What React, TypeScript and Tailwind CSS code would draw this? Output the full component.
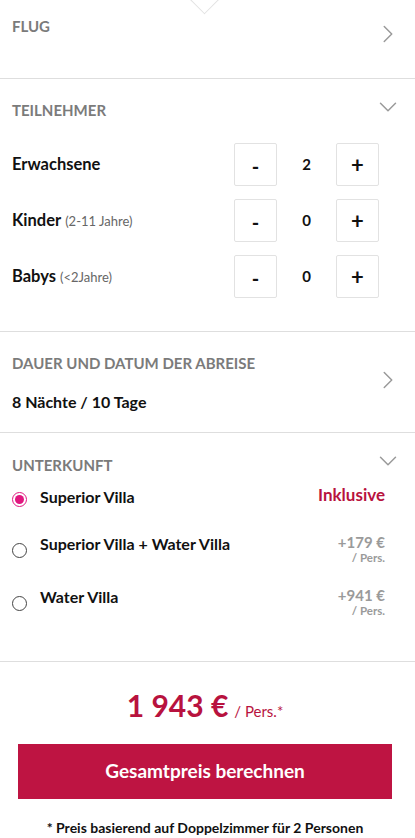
import { ChevronDown, ChevronRight } from "lucide-react";

const travellers = [
  { label: "Erwachsene", note: "", count: 2 },
  { label: "Kinder", note: "(2-11 Jahre)", count: 0 },
  { label: "Babys", note: "(<2Jahre)", count: 0 },
];

const rooms = [
  { name: "Superior Villa", price: "Inklusive", perPerson: false, selected: true },
  { name: "Superior Villa + Water Villa", price: "+179 €", perPerson: true, selected: false },
  { name: "Water Villa", price: "+941 €", perPerson: true, selected: false },
];

function SectionTitle({ children }: { children: React.ReactNode }) {
  return <h3 className="text-[15px] font-bold uppercase text-[#7b7b7b] leading-5">{children}</h3>;
}

function Counter({ count }: { count: number }) {
  return (
    <div className="flex items-center">
      <button className="w-[43px] h-[43px] border border-[#e2e2e2] rounded-[2px] flex items-center justify-center text-[20px] font-bold text-[#111] pt-[3px]">
        -
      </button>
      <span className="w-[59px] text-center text-[15px] font-bold text-[#111]">{count}</span>
      <button className="w-[43px] h-[43px] border border-[#e2e2e2] rounded-[2px] flex items-center justify-center text-[22px] font-bold text-[#111]">
        +
      </button>
    </div>
  );
}

function Radio({ checked }: { checked: boolean }) {
  return checked ? (
    <span className="mt-[5px] w-[15px] h-[15px] rounded-full border-[1.5px] border-[#e0177f] flex items-center justify-center shrink-0">
      <span className="w-[9px] h-[9px] rounded-full bg-[#e0177f]" />
    </span>
  ) : (
    <span className="mt-[9px] w-[15px] h-[15px] rounded-full border border-[#444] shrink-0" />
  );
}

export default function App() {
  return (
    <div
      className="relative w-[415px] h-[838px] bg-white overflow-hidden"
      style={{ fontFamily: "Lato, 'Liberation Sans', sans-serif" }}
    >
      {/* notch from the block above */}
      <div className="absolute left-[194px] top-[-11px] w-[21px] h-[21px] rotate-45 bg-white border-r border-b border-[#e2e2e2]" />

      {/* Flug */}
      <div className="h-[79px] border-b border-[#dedede] px-3 pt-[16px] flex justify-between">
        <SectionTitle>Flug</SectionTitle>
        <ChevronRight className="w-[30px] h-[30px] text-[#9a9a9a] mt-[3px]" strokeWidth={1.2} />
      </div>

      {/* Teilnehmer */}
      <div className="h-[253px] border-b border-[#dedede] pl-3 pr-[36px] pt-[21px]">
        <div className="flex justify-between">
          <SectionTitle>Teilnehmer</SectionTitle>
          <ChevronDown className="w-[30px] h-[30px] text-[#9a9a9a] -mr-[24px] -mt-[8px]" strokeWidth={1.2} />
        </div>
        <div className="mt-[21px] flex flex-col gap-[13px]">
          {travellers.map((t) => (
            <div key={t.label} className="h-[43px] flex items-center justify-between">
              <p className="text-[16.5px] font-bold text-[#111]">
                {t.label}
                {t.note && <span className="ml-1 text-[13px] font-normal text-[#666]">{t.note}</span>}
              </p>
              <Counter count={t.count} />
            </div>
          ))}
        </div>
      </div>

      {/* Dauer */}
      <div className="h-[101px] border-b border-[#dedede] px-3 pt-[21px] flex justify-between">
        <div>
          <SectionTitle>Dauer und Datum der Abreise</SectionTitle>
          <p className="mt-[19px] text-[16px] font-bold text-[#111] leading-5">8 Nächte / 10 Tage</p>
        </div>
        <ChevronRight className="w-[30px] h-[30px] text-[#9a9a9a] mt-[12px]" strokeWidth={1.2} />
      </div>

      {/* Unterkunft */}
      <div className="h-[229px] border-b border-[#dedede] pl-3 pr-[30px] pt-[22px]">
        <div className="flex justify-between">
          <SectionTitle>Unterkunft</SectionTitle>
          <ChevronDown className="w-[30px] h-[30px] text-[#9a9a9a] -mr-[18px] -mt-[9px]" strokeWidth={1.2} />
        </div>
        <div className="mt-[11px] flex flex-col">
          {rooms.map((r, i) => (
            <div key={r.name} className={`flex items-start gap-[13px] ${i === 0 ? "h-[47px]" : "h-[53px]"}`}>
              <Radio checked={r.selected} />
              <p className="flex-1 text-[16px] font-bold text-[#111] leading-5">{r.name}</p>
              {r.perPerson ? (
                <div className="text-right font-bold text-[#9a9a9a] -mt-[2px]">
                  <p className="text-[15px] leading-5">{r.price}</p>
                  <p className="text-[11.5px] leading-3">/ Pers.</p>
                </div>
              ) : (
                <p className="text-[17px] font-bold text-[#b8123e] leading-5 -mt-[2px]">{r.price}</p>
              )}
            </div>
          ))}
        </div>
      </div>

      {/* Preis */}
      <div className="pl-[18px] pr-[23px] pt-[24px] flex flex-col items-center">
        <div className="flex items-baseline text-[#b8123e] h-[38px]">
          <span className="text-[30px] font-bold leading-[38px]">1 943 €</span>
          <span className="text-[15px] ml-[6px] leading-[38px]">/ Pers.*</span>
        </div>
        <button className="mt-[20px] w-full h-[55px] bg-[#be1442] text-white text-[19px] font-bold">
          Gesamtpreis berechnen
        </button>
        <p className="mt-[20px] text-[14px] font-bold text-[#111] leading-[18px]">
          * Preis basierend auf Doppelzimmer für 2 Personen
        </p>
      </div>
    </div>
  );
}
